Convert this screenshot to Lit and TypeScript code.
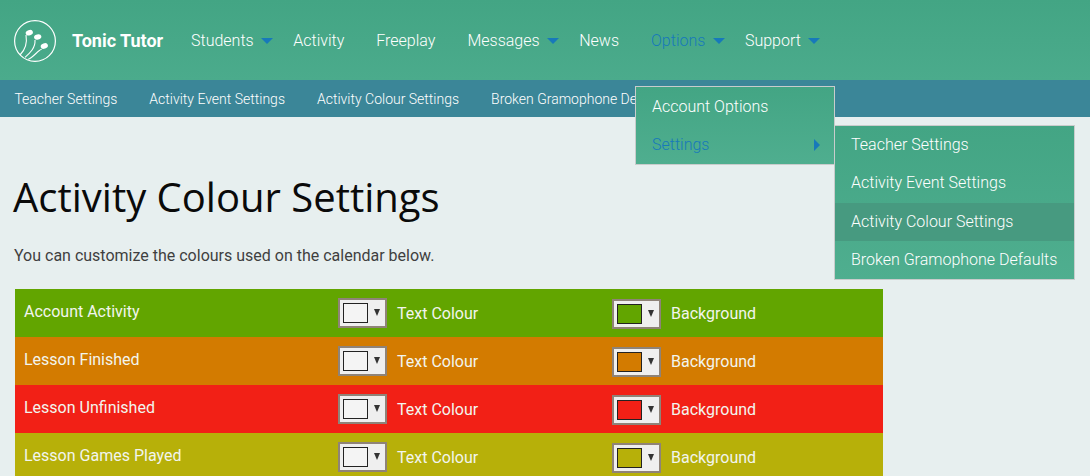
import { LitElement, html, css } from "lit";
import { customElement } from "lit/decorators.js";

const nav = [
  { t: "Students", sub: true },
  { t: "Activity" },
  { t: "Freeplay" },
  { t: "Messages", sub: true },
  { t: "News" },
  { t: "Options", sub: true, active: true },
  { t: "Support", sub: true },
];
const subnav = ["Teacher Settings", "Activity Event Settings", "Activity Colour Settings", "Broken Gramophone Defaults"];
const rows = [
  { t: "Account Activity", c: "#62a500" },
  { t: "Lesson Finished", c: "#d37b00" },
  { t: "Lesson Unfinished", c: "#f22016" },
  { t: "Lesson Games Played", c: "#b7b009" },
];

@customElement("app-root")
export class AppRoot extends LitElement {
  static styles = css`
    :host { display: block; width: 1090px; height: 476px; overflow: hidden; position: relative; background: #e7efef; font-family: Roboto, sans-serif; }
    * { box-sizing: border-box; }
    .top { height: 80px; display: flex; align-items: center; background: linear-gradient(#43a584, #4bab8c); color: #fff; padding-left: 14px; }
    .logo { width: 42px; height: 42px; display: block; margin-top: 2px; }
    .brand { font-size: 18px; font-weight: 700; margin-left: 16px; width: 103px; color: #fff; }
    .nav { display: flex; align-items: center; }
    .item { display: flex; align-items: center; font-size: 16px; font-weight: 300; padding: 0 16px; color: #fff; }
    .item.sub { padding-right: 4px; gap: 7.6px; }
    .item.active { color: #1779ba; }
    .arrow { width: 0; height: 0; border: 6px solid transparent; border-top-color: #1779ba; border-bottom-width: 0; margin-top: 1px; }
    .subnav { height: 37px; background: #3b8698; display: flex; align-items: center; padding-left: 14.4px; gap: 32px; font-size: 14px; font-weight: 300; color: #fff; }
    main { padding: 0 15px 0 13px; }
    h1 { margin: 0; padding-top: 53px; height: 113px; font: 400 40px/54px "Open Sans", sans-serif; color: #0a0a0a; }
    p { margin: 0 0 0 1px; height: 59px; padding-top: 14px; font-size: 16px; line-height: 24px; color: #3f3f3f; font-weight: 400; }
    .table { width: 868px; margin-left: 2px; }
    .row { height: 48px; display: flex; align-items: center; padding-left: 9px; color: #f2f5ee; font-size: 16px; font-weight: 400; }
    .name { width: 314px; position: relative; top: -2px; }
    .cell { display: flex; align-items: center; }
    .cell.text { width: 274px; }
    .label { margin-left: 10px; }
    .swatch { width: 49px; height: 30px; background: #efefef; border: 2px solid #8f8378; display: flex; align-items: center; padding-left: 3px; }
    .swatch.bg { position: relative; top: 1px; }
    .chip { width: 25px; height: 20px; border: 1px solid #222; background: #f4f4f4; }
    .tri { width: 0; height: 0; border: 3.5px solid transparent; border-top: 7px solid #333; border-bottom: 0; margin: -1px 0 0 6px; }
    .menu { position: absolute; background: linear-gradient(#43a584, #4fae8f); border: 1px solid #c9cccc; color: #fff; font-size: 16px; font-weight: 300; }
    .m1 { left: 635px; top: 86px; width: 200px; height: 79px; padding-top: 1px; }
    .m2 { left: 834px; top: 125px; width: 241px; height: 155px; }
    .mi { height: 38.25px; line-height: 16px; padding-left: 16px; display: flex; align-items: center; justify-content: space-between; }
    .mi.on { color: #1779ba; }
    .mi.hl { background: #479a80; }
    .rt { width: 0; height: 0; border: 6px solid transparent; border-left-color: #1779ba; border-right-width: 0; margin-right: 14px; }
  `;

  swatch(color: string, bg: boolean) {
    return html`<span class="swatch ${bg ? "bg" : ""}"><span class="chip" style="background:${color}"></span><span class="tri"></span></span>`;
  }

  render() {
    return html`
      <div class="top">
        <svg class="logo" viewBox="0 0 42 42" fill="none" stroke="#fff">
          <circle cx="21" cy="21" r="20.4" stroke-width="1.2"/>
          <path d="M12 15C13.5 24 10 31 6 35 M21 20C21.5 28 16 33 11 37.3 M27.7 29.3C24 30 20 37 14.3 39.3" stroke-width="1.1"/>
          <ellipse cx="15.3" cy="12.7" rx="3.7" ry="2.6" fill="#fff" stroke="none" transform="rotate(-20 15.3 12.7)"/>
          <ellipse cx="23.7" cy="17" rx="3.7" ry="2.6" fill="#fff" stroke="none" transform="rotate(-15 23.7 17)"/>
          <ellipse cx="30.3" cy="26" rx="3.7" ry="2.6" fill="#fff" stroke="none" transform="rotate(-20 30.3 26)"/>
        </svg>
        <div class="brand">Tonic Tutor</div>
        <div class="nav">
          ${nav.map(n => html`<div class="item ${n.sub ? "sub" : ""} ${n.active ? "active" : ""}">${n.t}${n.sub ? html`<span class="arrow"></span>` : ""}</div>`)}
        </div>
      </div>
      <div class="subnav">${subnav.map(s => html`<span>${s}</span>`)}</div>
      <main>
        <h1>Activity Colour Settings</h1>
        <p>You can customize the colours used on the calendar below.</p>
        <div class="table">
          ${rows.map(r => html`
            <div class="row" style="background:${r.c}">
              <div class="name">${r.t}</div>
              <div class="cell text">${this.swatch("#f4f4f4", false)}<span class="label">Text Colour</span></div>
              <div class="cell">${this.swatch(r.c, true)}<span class="label">Background</span></div>
            </div>`)}
        </div>
      </main>
      <div class="menu m1">
        <div class="mi">Account Options</div>
        <div class="mi on">Settings<span class="rt"></span></div>
      </div>
      <div class="menu m2">
        <div class="mi">Teacher Settings</div>
        <div class="mi">Activity Event Settings</div>
        <div class="mi hl">Activity Colour Settings</div>
        <div class="mi">Broken Gramophone Defaults</div>
      </div>
    `;
  }
}
